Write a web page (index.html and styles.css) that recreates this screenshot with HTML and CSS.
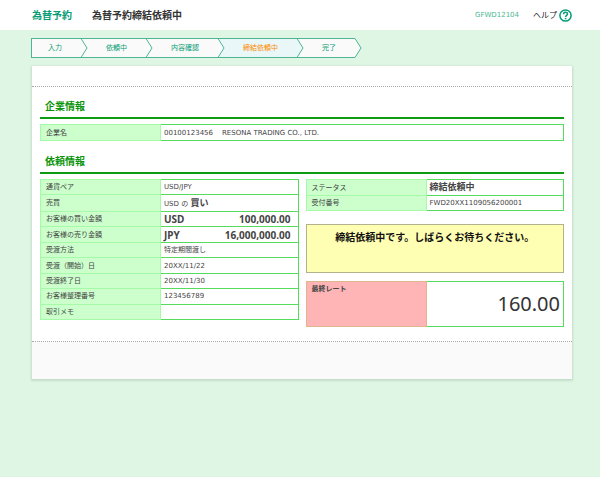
FILE: index.html
```
<!DOCTYPE html>
<html lang="ja">
<head>
    <meta charset="UTF-8">
    <meta name="viewport" content="width=device-width, initial-scale=1.0">
    <title>為替予約締結依頼中</title>
    <link rel="stylesheet" href="styles.css">
</head>
<body>
    <header class="header">
        <span class="category">為替予約</span>
        <h1 class="page-title">為替予約締結依頼中</h1>
        <span class="screen-id">GFWD12104</span>
        <a href="#" class="help">ヘルプ
            <svg width="13" height="13" viewBox="0 0 13 13" fill="none" stroke="#079c75" aria-hidden="true">
                <circle cx="6.5" cy="6.5" r="5.6" stroke-width="1.5"/>
                <path d="M4.6 5.2C4.6 2.6 8.5 2.7 8.5 5C8.5 6.4 6.6 6.3 6.6 7.9" stroke-width="1.5"/>
                <path d="M6.6 8.9V10.3" stroke-width="1.6"/>
            </svg>
        </a>
    </header>

    <!-- Progress steps -->
    <ol class="steps">
        <li class="step">
            <span class="step-label">入力</span>
            <svg class="arrow" width="7" height="20" viewBox="0 0 7 20" aria-hidden="true">
                <path d="M0 0H7V20H0Z" fill="#fafafa"/>
                <path d="M0 .5H7M0 19.5H7M0 .5L6 10L0 19.5" fill="none" stroke="#4db592"/>
            </svg>
        </li>
        <li class="step">
            <span class="step-label">依頼中</span>
            <svg class="arrow" width="7" height="20" viewBox="0 0 7 20" aria-hidden="true">
                <path d="M0 0H7V20H0Z" fill="#fafafa"/>
                <path d="M0 .5H7M0 19.5H7M0 .5L6 10L0 19.5" fill="none" stroke="#4db592"/>
            </svg>
        </li>
        <li class="step">
            <span class="step-label">内容確認</span>
            <svg class="arrow" width="7" height="20" viewBox="0 0 7 20" aria-hidden="true">
                <path d="M0 0H7V20H0Z" fill="#e9f7f8"/>
                <path d="M0 0L6 10L0 20Z" fill="#fafafa"/>
                <path d="M0 .5H7M0 19.5H7M0 .5L6 10L0 19.5" fill="none" stroke="#4db592"/>
            </svg>
        </li>
        <li class="step current" aria-current="step">
            <span class="step-label">締結依頼中</span>
            <svg class="arrow" width="7" height="20" viewBox="0 0 7 20" aria-hidden="true">
                <path d="M0 0H7V20H0Z" fill="#fafafa"/>
                <path d="M0 0L6 10L0 20Z" fill="#e9f7f8"/>
                <path d="M0 .5H7M0 19.5H7M0 .5L6 10L0 19.5" fill="none" stroke="#4db592"/>
            </svg>
        </li>
        <li class="step">
            <span class="step-label">完了</span>
            <svg class="arrow" width="7" height="20" viewBox="0 0 7 20" aria-hidden="true">
                <path d="M0 .5L6 10L0 19.5" fill="#fafafa" stroke="#4db592"/>
            </svg>
        </li>
    </ol>

    <main class="panel">
        <div class="panel-top"></div>

        <div class="panel-body">
            <section>
                <h2>企業情報</h2>
                <table class="info">
                    <tr class="company"><th scope="row">企業名</th><td>00100123456<span class="company-name">RESONA TRADING CO., LTD.</span></td></tr>
                </table>
            </section>

            <section>
                <h2>依頼情報</h2>
                <div class="columns">
                    <table class="info order">
                        <tr><th scope="row">通貨ペア</th><td>USD/JPY</td></tr>
                        <tr><th scope="row">売買</th><td>USD の <strong>買い</strong></td></tr>
                        <tr><th scope="row">お客様の買い金額</th><td><div class="amount"><span>USD</span><span>100,000.00</span></div></td></tr>
                        <tr><th scope="row">お客様の売り金額</th><td><div class="amount"><span>JPY</span><span>16,000,000.00</span></div></td></tr>
                        <tr><th scope="row">受渡方法</th><td>特定期間渡し</td></tr>
                        <tr><th scope="row">受渡（開始）日</th><td>20XX/11/22</td></tr>
                        <tr><th scope="row">受渡終了日</th><td>20XX/11/30</td></tr>
                        <tr><th scope="row">お客様整理番号</th><td>123456789</td></tr>
                        <tr><th scope="row">取引メモ</th><td></td></tr>
                    </table>

                    <div class="side">
                        <table class="info status">
                            <tr><th scope="row">ステータス</th><td><strong>締結依頼中</strong></td></tr>
                            <tr><th scope="row">受付番号</th><td>FWD20XX1109056200001</td></tr>
                        </table>
                        <p class="notice">締結依頼中です。しばらくお待ちください。</p>
                        <table class="info rate">
                            <tr><th scope="row">最終レート</th><td>160.00</td></tr>
                        </table>
                    </div>
                </div>
            </section>
        </div>

        <div class="panel-bottom"></div>
    </main>
</body>
</html>
```
FILE: styles.css
```
/* General Styles */
* {
    box-sizing: border-box;
}

body {
    min-height: 100vh;
    margin: 0;
    background-color: #dff6e4;
    color: #444;
    font-family: "Noto Sans", "Noto Sans CJK JP", sans-serif;
    font-size: 8px;
    line-height: 12px;
}

/* Header Styles */
.header {
    display: flex;
    align-items: center;
    height: 30px;
    padding: 0 28px 0 32px;
    background-color: white;
}

.category, .page-title {
    margin: 0;
    font-size: 10px;
    font-weight: bold;
}

.category {
    margin-right: 20px;
    color: #079c75;
}

.page-title {
    color: #333;
}

.screen-id {
    margin-left: auto;
    margin-right: 14px;
    color: #4db592;
    font-family: "DejaVu Sans", sans-serif;
    font-size: 7px;
}

.help {
    display: flex;
    align-items: center;
    gap: 2px;
    color: #222;
    text-decoration: none;
}

/* Progress steps */
.steps {
    display: flex;
    margin: 8px 28px 8px 31px;
    padding: 0;
    list-style: none;
}

.step {
    display: flex;
    color: #079c75;
    font-size: 7px;
}

.step-label {
    height: 20px;
    padding: 0 19px 0 18px;
    border-top: 1px solid #4db592;
    border-bottom: 1px solid #4db592;
    background-color: #fafafa;
    line-height: 18px;
}

.step:first-child {
    border-left: 1px solid #4db592;
}

.step:first-child .step-label {
    padding-left: 16px;
}

.current {
    color: #ff8c00;
}

.current .step-label {
    background-color: #e9f7f8;
}

.arrow {
    display: block;
}

/* Main panel */
.panel {
    margin: 0 28px 0 32px;
    background-color: white;
    box-shadow: 0 1px 2px 1px #c5dccb;
}

.panel-top {
    height: 21px;
    border-bottom: 1px dotted #aaa;
}

.panel-body {
    padding: 8px 8px 14px;
}

.panel-bottom {
    height: 38px;
    border-top: 1px dotted #aaa;
    background-color: #fafafa;
}

h2 {
    margin: 0 0 5px;
    padding: 4px 5px;
    border-bottom: 2px solid #0f9c14;
    color: #0a940a;
    font-size: 10px;
    line-height: 14px;
}

section + section {
    padding-top: 9px;
}

/* Label and value tables */
.info {
    width: 100%;
    border-collapse: collapse;
    table-layout: fixed;
}

.info th, .info td {
    padding: 0 3px;
    border: 1px solid #55dc5a;
    font-family: "DejaVu Sans", "Noto Sans CJK JP", sans-serif;
    font-size: 7px;
    text-align: left;
}

.info th {
    width: 120px;
    padding-left: 5px;
    border-color: #a5faa8;
    background-color: #ccffcc;
    font-weight: normal;
}

.company {
    height: 16px;
}

.company-name {
    margin-left: 9px;
}

.columns {
    display: grid;
    grid-template-columns: 1fr 1fr;
    gap: 7px;
    align-items: start;
}

.order {
    height: 141px;
}

.info strong {
    font-size: 9px;
}

.amount {
    display: flex;
    justify-content: space-between;
    padding-right: 4px;
    font-family: "Noto Sans", sans-serif;
    font-size: 10px;
    font-weight: bold;
}

.status {
    height: 32px;
}

/* Notice */
.notice {
    min-height: 49px;
    margin: 13px 0 8px;
    padding: 5px;
    border: 1px solid #b2b28c;
    background-color: #ffffb3;
    color: #111;
    font-size: 10px;
    font-weight: bold;
    line-height: 14px;
    text-align: center;
}

/* Final rate */
.rate {
    height: 46px;
}

.info.rate th {
    padding-top: 1px;
    border-color: #dfb58e;
    background-color: #ffb5b5;
    font-weight: bold;
    vertical-align: top;
}

.info.rate td {
    color: #333;
    font-family: "Noto Sans", sans-serif;
    font-size: 20px;
    line-height: 28px;
    text-align: right;
}
```
